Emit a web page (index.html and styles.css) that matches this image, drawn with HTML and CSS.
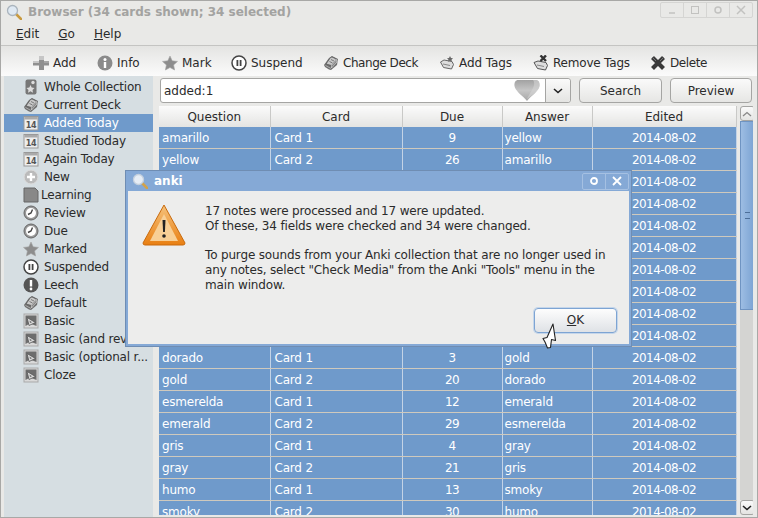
FILE: index.html
```html
<!DOCTYPE html>
<html lang="en">
<head>
  <meta charset="UTF-8" />
  <title>Browser (34 cards shown; 34 selected)</title>
  <link rel="stylesheet" href="styles.css">
</head>
<body>

  <!-- Shared icons -->
  <svg class="defs" width="0" height="0">
    <defs>
      <linearGradient id="heart-fill" x1="0" y1="0" x2="0" y2="1">
        <stop offset="0" stop-color="#a2a2a2"/>
        <stop offset=".5" stop-color="#c6c6c6"/>
        <stop offset="1" stop-color="#a6a6a6"/>
      </linearGradient>
      <symbol id="i-deck" viewBox="0 0 16 16">
        <path d="M1 10 6 3l3-2 6 3-1 6-6 5-2-.5-4-2.500z" fill="#6e6e6e"/>
        <path d="M3 9l4.500-6.500L9 2l4.500 2.200L8.500 10.500z" fill="#c9c9c9" stroke="#555" stroke-width=".7"/>
        <path d="M8.500 10.500 13.500 4.500 14 7l-5.500 6zM2.500 10.500l5.500 3" fill="#8a8a8a" stroke="#eee" stroke-width=".5"/>
        <path d="M8 4.500l3 1.500M6.500 6.500l3 1.500" stroke="#666" stroke-width=".8"/>
      </symbol>
      <symbol id="i-cal" viewBox="0 0 16 16">
        <rect x="1" y="1.500" width="14" height="13.500" fill="#eee" stroke="#999"/>
        <rect x="1.500" y="2" width="13" height="2.500" fill="#aaa"/>
        <text x="8" y="12.500" class="cal-num">14</text>
      </symbol>
      <symbol id="i-clock" viewBox="0 0 16 16">
        <circle cx="8" cy="8" r="7" fill="#999" stroke="#666"/>
        <circle cx="8" cy="8" r="5" fill="#fff"/>
        <path d="M9.500 4.500 8 8 5 9.500" stroke="#444" stroke-width="1.400" fill="none"/>
      </symbol>
      <symbol id="i-star" viewBox="0 0 16 16">
        <path d="M8 1l2.200 4.800 5.300.6-3.900 3.500 1 5.100L8 12.500 3.400 15l1-5.100L.5 6.400l5.300-.6z" fill="#8d8d8d" stroke="#a5a5a5" stroke-width=".6"/>
      </symbol>
      <symbol id="i-pause" viewBox="0 0 16 16">
        <circle cx="8" cy="8" r="7" fill="#fff" stroke="#444" stroke-width="1.500"/>
        <rect x="5.500" y="5" width="1.800" height="6" fill="#444"/>
        <rect x="8.700" y="5" width="1.800" height="6" fill="#444"/>
      </symbol>
      <symbol id="i-note" viewBox="0 0 16 16">
        <rect x="1" y="1" width="14" height="14" fill="#d9d9d9" stroke="#a9a9a9"/>
        <path d="M2.500 2.500h11v10.500l-6.500-2.500L2.500 13z" fill="#6d6d6d"/>
        <path d="M4 4.500l8.500 5-6.500 3z" fill="#d9d9d9" stroke="#555" stroke-width=".8"/>
        <path d="M6.500 7.500l2.500 1.800-2 .8z" fill="#6d6d6d"/>
      </symbol>
      <symbol id="i-tag" viewBox="0 0 16 16">
        <path d="M1.500 7 5 5l8 1.500 1.500 3-2 4.500-8-1.500z" fill="#ddd" stroke="#666"/>
        <path d="M4 9l7 1.500" stroke="#888"/>
        <path d="M11 1l1 2 2 .3-1.500 1.500.4 2-1.900-1-1.900 1 .4-2L8 3.300l2-.3z" fill="#666"/>
      </symbol>
    </defs>
  </svg>

  <div class="window">

    <div class="titlebar">
      <svg class="lens" width="16" height="16" viewBox="0 0 16 16">
        <path d="M9.500 9.500 15 15" stroke="#c99a3f" stroke-width="2.500" stroke-linecap="round"/>
        <circle cx="6.500" cy="6.500" r="5" fill="#dfe9f3" stroke="#aab4bd" stroke-width="1.300"/>
      </svg>
      <span class="title-text">Browser (34 cards shown; 34 selected)</span>
      <div class="win-buttons">
        <span class="win-btn"><svg width="10" height="10" viewBox="0 0 10 10"><path d="M2 8h6" stroke="#c2c2c0" stroke-width="1.500"/></svg></span>
        <span class="win-btn"><svg width="10" height="10" viewBox="0 0 10 10"><rect x="1.500" y="1.500" width="7" height="7" fill="none" stroke="#c2c2c0"/></svg></span>
        <span class="win-btn"><svg width="10" height="10" viewBox="0 0 10 10"><circle cx="5" cy="5" r="3" fill="none" stroke="#c2c2c0" stroke-width="1.500"/></svg></span>
        <span class="win-btn"><svg width="10" height="10" viewBox="0 0 10 10"><path d="M1 1l8 8M9 1l-8 8" stroke="#c2c2c0" stroke-width="1.500"/></svg></span>
      </div>
    </div>

    <div class="menubar">
      <span><u>E</u>dit</span>
      <span><u>G</u>o</span>
      <span><u>H</u>elp</span>
    </div>

    <div class="toolbar">
      <div class="tool t-add">
        <svg class="ic" viewBox="0 0 16 16"><path d="M6 1h5v5h5v4.500h-5V15H6v-4.500H0V6h6z" fill="#8f8f8f"/><path d="M6 1h5v4H6zM0 6h6v2H0z" fill="#c6c6c6"/><path d="M11 6h5v2h-5z" fill="#a5a5a5"/></svg>Add
      </div>
      <div class="tool t-info">
        <svg class="ic" viewBox="0 0 16 16"><circle cx="8" cy="8" r="7.500" fill="#8b8b8b"/><circle cx="8" cy="4.500" r="1.500" fill="#fff"/><rect x="6.800" y="7" width="2.400" height="6" fill="#fff"/></svg>Info
      </div>
      <div class="tool t-mark"><svg class="ic"><use href="#i-star"/></svg>Mark</div>
      <div class="tool t-suspend"><svg class="ic"><use href="#i-pause"/></svg>Suspend</div>
      <div class="tool t-deck"><svg class="ic"><use href="#i-deck"/></svg>Change Deck</div>
      <div class="tool t-tags"><svg class="ic"><use href="#i-tag"/></svg>Add Tags</div>
      <div class="tool t-remove">
        <svg class="ic" viewBox="0 0 16 16"><path d="M1 7.500 5 6l8 1.500 1.500 3-2 4.500-8-1.500z" fill="#ddd" stroke="#555"/><path d="M4 10l7 1.500" stroke="#888"/><path d="M7.500 .5l5.500 5.500M13 .5 7.500 6" stroke="#333" stroke-width="2.400"/></svg>Remove Tags
      </div>
      <div class="tool t-delete">
        <svg class="ic" viewBox="0 0 16 16"><path d="M2.500 2.500l11 11M13.500 2.500l-11 11" stroke="#3a3a3a" stroke-width="4.200"/><path d="M2 2l4 4M14 2l-4 4" stroke="#777" stroke-width="1"/></svg>Delete
      </div>
    </div>

    <div class="main">

      <ul class="sidebar">
        <li>
          <svg class="ic" viewBox="0 0 16 16"><rect x="2.500" y="0.500" width="11" height="15" rx="2" fill="#777"/><circle cx="10" cy="3.500" r="1.700" fill="#ddd"/><path d="M6.500 6l1.200 2.500 2.800.4-2 2 .5 2.800-2.500-1.400-2.500 1.400.5-2.800-2-2 2.800-.4z" fill="#ddd" transform="translate(1 0)"/></svg>
          Whole Collection
        </li>
        <li><svg class="ic"><use href="#i-deck"/></svg>Current Deck</li>
        <li class="active"><svg class="ic"><use href="#i-cal"/></svg>Added Today</li>
        <li><svg class="ic"><use href="#i-cal"/></svg>Studied Today</li>
        <li><svg class="ic"><use href="#i-cal"/></svg>Again Today</li>
        <li>
          <svg class="ic" viewBox="0 0 16 16"><circle cx="8" cy="8" r="7" fill="#bbb" stroke="#ddd"/><path d="M8 4v8M4 8h8" stroke="#fff" stroke-width="2.400"/></svg>
          New
        </li>
        <li class="tight">
          <svg class="ic" viewBox="0 0 16 16"><path d="M1 1h11l3 3v11H1z" fill="#888" stroke="#666"/></svg>
          Learning
        </li>
        <li><svg class="ic"><use href="#i-clock"/></svg>Review</li>
        <li><svg class="ic"><use href="#i-clock"/></svg>Due</li>
        <li><svg class="ic"><use href="#i-star"/></svg>Marked</li>
        <li><svg class="ic"><use href="#i-pause"/></svg>Suspended</li>
        <li>
          <svg class="ic" viewBox="0 0 16 16"><circle cx="8" cy="8" r="7.500" fill="#555"/><rect x="6.800" y="3" width="2.400" height="6.500" fill="#fff"/><circle cx="8" cy="12" r="1.400" fill="#fff"/></svg>
          Leech
        </li>
        <li><svg class="ic"><use href="#i-deck"/></svg>Default</li>
        <li><svg class="ic"><use href="#i-note"/></svg>Basic</li>
        <li><svg class="ic"><use href="#i-note"/></svg>Basic (and reversed card)</li>
        <li><svg class="ic"><use href="#i-note"/></svg><span class="cut">Basic (optional r...</span></li>
        <li><svg class="ic"><use href="#i-note"/></svg>Cloze</li>
      </ul>

      <div class="content">
        <div class="search-row">
          <div class="search-box">
            <span class="search-text">added:1</span>
            <svg class="heart" width="26" height="21" viewBox="0 0 26 21"><path d="M13 21C8 15 1 11 .5 6 0 2 2 0 4 0h18c2 0 4 2 3.500 6C25 11 18 15 13 21z" fill="url(#heart-fill)"/><path d="M13 19C15 14 19 10 20 5c.4-2 0-4-1-5h3c2 0 4 2 3.500 6C25 11 18 15 13 19z" fill="#d4d4d4" opacity=".6"/></svg>
            <span class="search-drop"><svg width="10" height="6" viewBox="0 0 10 6"><path d="M1 1l4 3.500L9 1" fill="none" stroke="#222" stroke-width="1.600"/></svg></span>
          </div>
          <button class="btn search-btn">Search</button>
          <button class="btn preview-btn">Preview</button>
        </div>

        <div class="table-wrap">
          <table class="cards">
            <colgroup>
              <col class="c1"><col class="c2"><col class="c3"><col class="c4"><col class="c5">
            </colgroup>
            <thead>
              <tr><th>Question</th><th>Card</th><th>Due</th><th>Answer</th><th>Edited</th></tr>
            </thead>
            <tbody>
              <tr><td>amarillo</td><td>Card 1</td><td class="mid">9</td><td>yellow</td><td class="mid">2014-08-02</td></tr>
              <tr><td>yellow</td><td>Card 2</td><td class="mid">26</td><td>amarillo</td><td class="mid">2014-08-02</td></tr>
              <tr><td>azul</td><td>Card 1</td><td class="mid">1</td><td>blue</td><td class="mid">2014-08-02</td></tr>
              <tr><td>blue</td><td>Card 2</td><td class="mid">18</td><td>azul</td><td class="mid">2014-08-02</td></tr>
              <tr><td>blanco</td><td>Card 1</td><td class="mid">5</td><td>white</td><td class="mid">2014-08-02</td></tr>
              <tr><td>white</td><td>Card 2</td><td class="mid">22</td><td>blanco</td><td class="mid">2014-08-02</td></tr>
              <tr><td>marrón</td><td>Card 1</td><td class="mid">7</td><td>brown</td><td class="mid">2014-08-02</td></tr>
              <tr><td>brown</td><td>Card 2</td><td class="mid">24</td><td>marrón</td><td class="mid">2014-08-02</td></tr>
              <tr><td>rojo</td><td>Card 1</td><td class="mid">2</td><td>red</td><td class="mid">2014-08-02</td></tr>
              <tr><td>red</td><td>Card 2</td><td class="mid">19</td><td>rojo</td><td class="mid">2014-08-02</td></tr>
              <tr><td>dorado</td><td>Card 1</td><td class="mid">3</td><td>gold</td><td class="mid">2014-08-02</td></tr>
              <tr><td>gold</td><td>Card 2</td><td class="mid">20</td><td>dorado</td><td class="mid">2014-08-02</td></tr>
              <tr><td>esmerelda</td><td>Card 1</td><td class="mid">12</td><td>emerald</td><td class="mid">2014-08-02</td></tr>
              <tr><td>emerald</td><td>Card 2</td><td class="mid">29</td><td>esmerelda</td><td class="mid">2014-08-02</td></tr>
              <tr><td>gris</td><td>Card 1</td><td class="mid">4</td><td>gray</td><td class="mid">2014-08-02</td></tr>
              <tr><td>gray</td><td>Card 2</td><td class="mid">21</td><td>gris</td><td class="mid">2014-08-02</td></tr>
              <tr><td>humo</td><td>Card 1</td><td class="mid">13</td><td>smoky</td><td class="mid">2014-08-02</td></tr>
              <tr><td>smoky</td><td>Card 2</td><td class="mid">30</td><td>humo</td><td class="mid">2014-08-02</td></tr>
            </tbody>
          </table>

          <div class="scrollbar">
            <span class="sb-btn"><svg width="10" height="6" viewBox="0 0 10 6"><path d="M1 5l4-3.500L9 5" fill="none" stroke="#888" stroke-width="1.300"/></svg></span>
            <div class="sb-thumb"><span class="grip"></span></div>
            <div class="sb-track"></div>
            <span class="sb-btn"><svg width="10" height="6" viewBox="0 0 10 6"><path d="M1 1l4 3.500L9 1" fill="none" stroke="#222" stroke-width="1.600"/></svg></span>
          </div>
        </div>
      </div>
    </div>
  </div>

  <!-- Message dialog -->
  <div class="dialog">
    <div class="dlg-title">
      <svg width="16" height="16" viewBox="0 0 16 16">
        <path d="M9.500 9.500 15 15" stroke="#d3a24a" stroke-width="2.500" stroke-linecap="round"/>
        <circle cx="6.500" cy="6.500" r="5" fill="#e6edf5" stroke="#c3cfdd" stroke-width="1.300"/>
      </svg>
      <span class="dlg-name">anki</span>
      <div class="dlg-buttons">
        <span class="dlg-btn"><svg width="10" height="10" viewBox="0 0 10 10"><circle cx="5" cy="5" r="3" fill="none" stroke="#fff" stroke-width="1.800"/></svg></span>
        <span class="dlg-btn"><svg width="10" height="10" viewBox="0 0 10 10"><path d="M1 1l8 8M9 1l-8 8" stroke="#fff" stroke-width="1.800"/></svg></span>
      </div>
    </div>
    <div class="dlg-body">
      <svg class="warn" width="46" height="44" viewBox="0 0 46 44">
        <defs>
          <linearGradient id="warn-fill" x1="0" y1="0" x2="0" y2="1">
            <stop offset="0" stop-color="#f5c27c"/>
            <stop offset="1" stop-color="#e97f12"/>
          </linearGradient>
        </defs>
        <path d="M23 2 44 40q0 2-2 2H4q-2 0-2-2z" fill="url(#warn-fill)" stroke="#c96a0c" stroke-linejoin="round"/>
        <path d="M23 11 37 38H9z" fill="#f8cf95"/>
        <path d="M21.500 17h3l-.6 12h-1.800z" fill="#222"/>
        <circle cx="23" cy="33" r="1.800" fill="#222"/>
      </svg>
      <div class="dlg-text">
        <p>17 notes were processed and 17 were updated.<br>Of these, 34 fields were checked and 34 were changed.</p>
        <p>To purge sounds from your Anki collection that are no longer used in<br>any notes, select "Check Media" from the Anki "Tools" menu in the<br>main window.</p>
      </div>
    </div>
    <div class="dlg-foot">
      <button class="btn ok-btn"><u>O</u>K</button>
    </div>
  </div>

  <svg class="pointer" width="16" height="26" viewBox="0 0 16 26">
    <path d="M11 1 13.500 17.500 9.500 16.500 8.500 24.500 5.500 25 3 19 1 15.500 5 14.500z" fill="#fff" stroke="#222" stroke-width="1.100" stroke-linejoin="round"/>
  </svg>

</body>
</html>
```

FILE: styles.css
```css
html, body {
  margin: 0;
  padding: 0;
  height: 518px;
  overflow: hidden;
}

body {
  font-family: "DejaVu Sans", sans-serif;
  font-size: 12px;
  color: #2b2b2b;
  background: #e9e9e7;
  position: relative;
}

.defs {
  position: absolute;
}

.cal-num {
  font-size: 8px;
  font-weight: bold;
  text-anchor: middle;
  fill: #555;
}

.ic {
  width: 16px;
  height: 16px;
  flex: none;
}

.window {
  height: 518px;
  box-sizing: border-box;
  border: 1px solid #a8a8a6;
  display: flex;
  flex-direction: column;
  background: #e9e9e7;
}

.titlebar {
  height: 22px;
  display: flex;
  align-items: center;
  padding: 0 4px 0 5px;
  flex: none;
}

.title-text {
  margin-left: 6px;
  font-weight: bold;
  color: #a3a3a1;
}

.win-buttons {
  margin-left: auto;
  display: flex;
  border: 1px solid #d5d5d3;
  border-radius: 2px;
  margin-top: -4px;
}

.win-btn {
  width: 22px;
  height: 14px;
  display: flex;
  align-items: center;
  justify-content: center;
  border-right: 1px solid #d5d5d3;
}

.win-btn:last-child {
  border-right: none;
}

.menubar {
  height: 22px;
  flex: none;
  display: flex;
  align-items: center;
  gap: 19px;
  padding-left: 15px;
  border-bottom: 1px solid #c4c4c2;
}

.toolbar {
  height: 30px;
  box-sizing: border-box;
  padding-top: 3px;
  flex: none;
  display: flex;
  align-items: center;
  padding-left: 32px;
  background: linear-gradient(#e4e4e2, #fbfbfb);
}

.tool {
  display: flex;
  align-items: center;
  gap: 4px;
  white-space: nowrap;
}

.t-add { width: 64px; }
.t-info { width: 65px; }
.t-mark { width: 69px; }
.t-suspend { width: 92px; }
.t-deck { width: 116px; letter-spacing: -0.45px; }
.t-tags { width: 94px; letter-spacing: -0.1px; }
.t-remove { width: 117px; letter-spacing: -0.2px; }
.t-delete { letter-spacing: -0.4px; }

.main {
  flex: 1;
  display: flex;
  min-height: 0;
  padding-left: 3px;
}

.sidebar {
  list-style: none;
  margin: 0;
  padding: 2px 0 0;
  width: 149px;
  flex: none;
  background: #d6dee2;
  box-sizing: border-box;
  letter-spacing: -0.2px;
}

.sidebar li {
  height: 18px;
  display: flex;
  align-items: center;
  gap: 5px;
  padding-left: 19px;
  white-space: nowrap;
  overflow: hidden;
}

.sidebar li.tight {
  gap: 2px;
}

.sidebar li.active {
  background: #6f9acb;
  color: #fff;
}

.content {
  flex: 1;
  min-width: 0;
  display: flex;
  flex-direction: column;
  padding: 2px 4px 2px 6px;
}

.search-row {
  display: flex;
  align-items: center;
  height: 25px;
  flex: none;
  gap: 8px;
  margin-bottom: 3px;
}

.search-box {
  width: 409px;
  height: 23px;
  margin-left: 1px;
  background: #fff;
  border: 1px solid #a5a5a3;
  border-radius: 3px;
  display: flex;
  align-items: center;
  position: relative;
}

.search-text {
  padding-left: 3px;
  flex: 1;
}

.heart {
  margin-right: 5px;
}

.search-drop {
  width: 24px;
  height: 100%;
  display: flex;
  align-items: center;
  justify-content: center;
  background: linear-gradient(#fafafa, #e4e4e2);
  border-left: 1px solid #a5a5a3;
  border-radius: 0 3px 3px 0;
}

.btn {
  font-family: inherit;
  font-size: 12px;
  color: #2b2b2b;
  background: linear-gradient(#fafafa, #e6e6e4);
  border: 1px solid #a5a5a3;
  border-radius: 4px;
  padding: 0;
}

.search-btn {
  width: 83px;
  height: 25px;
}

.preview-btn {
  width: 82px;
  height: 25px;
}

.table-wrap {
  flex: 1;
  display: flex;
  min-height: 0;
  overflow: hidden;
}

.cards {
  border-collapse: collapse;
  table-layout: fixed;
  width: 577px;
  align-self: flex-start;
}

.c1 { width: 111px; }
.c2 { width: 132px; }
.c3 { width: 100px; }
.c4 { width: 90px; }
.c5 { width: 144px; }

.cards th {
  height: 21px;
  padding: 0;
  font-weight: normal;
  background: linear-gradient(#fbfbfb, #e4e4e2);
  border-right: 1px solid #c9c9c7;
}

.cards td {
  height: 21px;
  padding: 0 0 0 3px;
  background: #6f9acb;
  color: #fff;
  border-bottom: 1px solid #cfc9bd;
  border-right: 1px solid #c3d3e6;
  white-space: nowrap;
  overflow: hidden;
  letter-spacing: -0.2px;
}

.cards td:nth-child(2) {
  padding-left: 4px;
}

.cards td:nth-child(4) {
  padding-left: 2px;
}

.cards td.mid {
  text-align: center;
  padding-left: 0;
  letter-spacing: -0.55px;
}

.scrollbar {
  width: 15px;
  margin-left: 3px;
  display: flex;
  flex-direction: column;
  flex: none;
}

.sb-btn {
  height: 15px;
  flex: none;
  display: flex;
  align-items: center;
  justify-content: center;
  background: linear-gradient(#fafafa, #e4e4e2);
  border: 1px solid #a5a5a3;
  border-radius: 3px;
  box-sizing: border-box;
}

.sb-thumb {
  height: 189px;
  flex: none;
  background: linear-gradient(90deg, #9dbde3, #7ba3d3);
  border: 1px solid #6f94c2;
  box-sizing: border-box;
  display: flex;
  align-items: center;
  justify-content: center;
}

.grip {
  width: 5px;
  height: 5px;
  border-top: 1px solid #4d6f99;
  border-bottom: 1px solid #4d6f99;
  position: relative;
}

.sb-track {
  flex: 1;
  background: #d4d4d2;
}

.dialog {
  position: absolute;
  left: 125px;
  top: 170px;
  width: 507px;
  height: 177px;
  box-sizing: border-box;
  background: #ededec;
  border: 3px solid #85a9d6;
  border-top-width: 1px;
  outline: 1px solid #6f8db3;
  outline-offset: -1px;
  display: flex;
  flex-direction: column;
}

.dlg-title {
  height: 20px;
  margin: 0 -3px;
  padding: 0 3px 0 7px;
  flex: none;
  background: #85a9d6;
  display: flex;
  align-items: center;
  gap: 6px;
}

.dlg-name {
  color: #fff;
  font-weight: bold;
}

.dlg-buttons {
  margin-left: auto;
  display: flex;
  border: 1px solid #a5c0e2;
  border-radius: 2px;
}

.dlg-btn {
  width: 22px;
  height: 15px;
  display: flex;
  align-items: center;
  justify-content: center;
  border-right: 1px solid #a5c0e2;
}

.dlg-btn:last-child {
  border-right: none;
}

.dlg-body {
  display: flex;
  gap: 18px;
  padding: 12px 0 0 13px;
}

.warn {
  flex: none;
}

.dlg-text {
  line-height: 14.7px;
  margin-top: 1px;
  letter-spacing: -0.16px;
}

.dlg-text p {
  margin: 0 0 15px;
}

.dlg-foot {
  margin-top: auto;
  display: flex;
  justify-content: flex-end;
  padding: 0 12px 14px 0;
}

.ok-btn {
  width: 83px;
  height: 25px;
  border: 1px solid #7da4d3;
  background: linear-gradient(#fdfdfd, #dfe2e6);
  box-shadow: 0 0 0 1px #c5d6ea;
}

.pointer {
  position: absolute;
  left: 542px;
  top: 323px;
}
```
